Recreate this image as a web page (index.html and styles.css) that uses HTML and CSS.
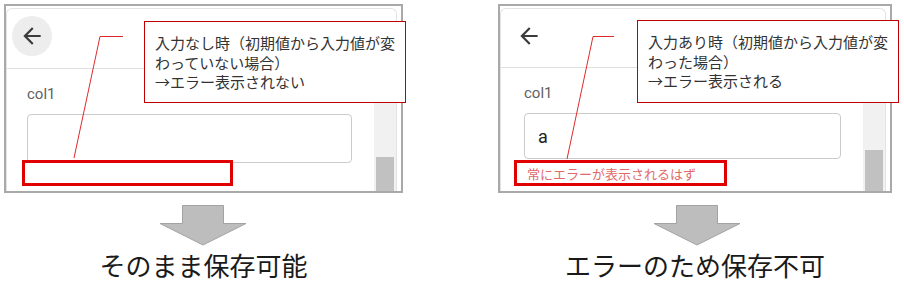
FILE: index.html
```html
<!DOCTYPE html>
<html lang="ja">

<head>
  <meta charset="UTF-8">
  <meta name="viewport" content="width=device-width, initial-scale=1.0">
  <title>col1 エラー表示の比較</title>
  <link rel="stylesheet" href="styles.css">
</head>

<body>
  <main class="sheet">
    <!-- 入力なし -->
    <section class="case case--before">
      <div class="panel">
        <div class="card">
          <div class="card-head">
            <button class="back is-hover" aria-label="戻る">
              <svg viewBox="0 0 24 24" width="26" height="26"><path d="M20 11H7.83l5.59-5.59L12 4l-8 8 8 8 1.41-1.41L7.83 13H20v-2z" /></svg>
            </button>
          </div>
          <div class="card-body">
            <div class="form">
              <label class="field-label" for="col1-before">col1</label>
              <input class="field" id="col1-before" type="text" value="" readonly>
              <p class="field-error">&nbsp;</p>
            </div>
            <div class="scrollbar"><div class="thumb"></div></div>
          </div>
        </div>
      </div>

      <div class="mark"></div>
      <svg class="leader" width="160" height="170"><polyline points="119,32.5 96,32.5 70,154" /></svg>
      <div class="note">入力なし時（初期値から入力値が変<br>わっていない場合）<br>→エラー表示されない</div>

      <svg class="down-arrow" viewBox="0 0 88 41" width="88" height="41"><polygon points="23.5,0.5 64.5,0.5 64.5,18.5 87,18.5 44,40 1,18.5 23.5,18.5" /></svg>
      <p class="caption">そのまま保存可能</p>
    </section>

    <!-- 入力あり -->
    <section class="case case--after">
      <div class="panel">
        <div class="card">
          <div class="card-head">
            <button class="back" aria-label="戻る">
              <svg viewBox="0 0 24 24" width="26" height="26"><path d="M20 11H7.83l5.59-5.59L12 4l-8 8 8 8 1.41-1.41L7.83 13H20v-2z" /></svg>
            </button>
          </div>
          <div class="card-body">
            <div class="form">
              <label class="field-label" for="col1-after">col1</label>
              <input class="field" id="col1-after" type="text" value="a" readonly>
              <p class="field-error">常にエラーが表示されるはず</p>
            </div>
            <div class="scrollbar"><div class="thumb"></div></div>
          </div>
        </div>
      </div>

      <div class="mark"></div>
      <svg class="leader" width="160" height="170"><polyline points="116,32.5 95,32.5 69,155" /></svg>
      <div class="note">入力あり時（初期値から入力値が変<br>わった場合）<br>→エラー表示される</div>

      <svg class="down-arrow" viewBox="0 0 88 41" width="88" height="41"><polygon points="23.5,0.5 64.5,0.5 64.5,18.5 87,18.5 44,40 1,18.5 23.5,18.5" /></svg>
      <p class="caption">エラーのため保存不可</p>
    </section>
  </main>
</body>

</html>
```

FILE: styles.css
```css
body {
  margin: 0;
  background-color: #fff;
  color: #262626;
  font-family: "Noto Sans CJK JP", sans-serif;
}

.sheet {
  display: flex;
  gap: 95px;
  padding: 4px 0 0 4px;
}

/* one column: screenshot + arrow + caption */
.case {
  position: relative;
  width: 399px;
  --pad-left: 20px;
  --head-h: 59px;
  --field-h: 49px;
  --thumb-top: 88px;
}

.case--after {
  width: 394px;
  --pad-left: 23px;
  --head-h: 58px;
  --field-h: 46px;
  --thumb-top: 82px;
}

.panel {
  display: flex;
  flex-direction: column;
  height: 189px;
  box-sizing: border-box;
  padding: 2px 4px 0 0;
  border: 2px solid #a9a9a9;
  overflow: hidden;
}

.card {
  flex: 1;
  display: flex;
  flex-direction: column;
  min-height: 0;
  border: 1px solid #e3e3e3;
  border-bottom: none;
  border-radius: 6px 6px 0 0;
}

.card-head {
  display: flex;
  align-items: flex-start;
  height: var(--head-h);
  padding-left: calc(var(--pad-left) - 15px);
  border-bottom: 1px solid #e0e0e0;
}

.back {
  display: grid;
  place-items: center;
  width: 40px;
  height: 40px;
  margin-top: 7px;
  padding: 0;
  border: none;
  border-radius: 50%;
  background-color: transparent;
  fill: #3c3c3c;
}

.back.is-hover {
  background-color: #ededed;
}

.card-body {
  flex: 1;
  display: flex;
  min-height: 0;
}

.form {
  flex: 1;
  padding: 15px 22px 0 var(--pad-left);
}

.field-label {
  display: block;
  font: 15px/20px Roboto, sans-serif;
  color: #616161;
}

.field {
  display: block;
  width: 100%;
  height: var(--field-h);
  box-sizing: border-box;
  margin-top: 10px;
  padding: 0 13px;
  border: 1px solid #cbcbcb;
  border-radius: 4px;
  font: 18px Roboto, sans-serif;
  color: #222;
  outline: none;
}

.field-error {
  margin: 6px 0 0;
  padding-left: 3px;
  font-size: 13px;
  line-height: 18px;
  color: #e06a6a;
  white-space: nowrap;
}

.scrollbar {
  width: 22px;
  box-sizing: border-box;
  padding: var(--thumb-top) 2px 0;
  background-color: #f1f1f1;
}

.thumb {
  height: 60px;
  background-color: #c1c1c1;
}

/* annotations drawn over the screenshot */
.mark {
  position: absolute;
  top: 156px;
  height: 26px;
  box-sizing: border-box;
  border: 3px solid #e00000;
}

.case--before .mark {
  left: 18px;
  width: 211px;
}

.case--after .mark {
  left: 16px;
  width: 213px;
}

.leader {
  position: absolute;
  top: 0;
  left: 0;
  overflow: visible;
}

.leader polyline {
  fill: none;
  stroke: #e02a2a;
  stroke-width: 1;
}

.note {
  position: absolute;
  top: 17px;
  left: 140px;
  width: 262px;
  height: 82px;
  box-sizing: border-box;
  padding: 11px 6px 0 10px;
  border: 1px solid #c00000;
  background-color: #fff;
  font-size: 15px;
  line-height: 19.5px;
  color: #333;
  white-space: nowrap;
}

.case--after .note {
  top: 16px;
  left: 139px;
  height: 83px;
}

.down-arrow {
  display: block;
  margin: 12px 0 0 155px;
}

.down-arrow polygon {
  fill: #bdbdbd;
  stroke: #a3a3a3;
  stroke-width: 1;
}

.caption {
  margin: 4px 0 0;
  font-size: 26px;
  line-height: 30px;
  text-align: center;
  color: #1a1a1a;
}
```
